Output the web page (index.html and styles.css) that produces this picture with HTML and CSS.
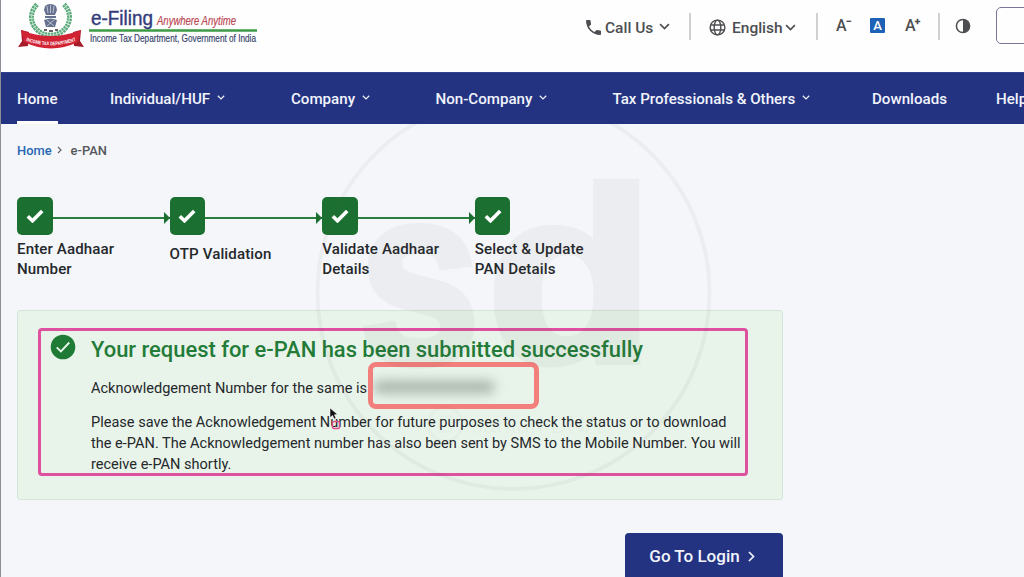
FILE: index.html
```html
<!DOCTYPE html>
<html lang="en">
<head>
<meta charset="utf-8">
<title>e-Filing | e-PAN</title>
<link rel="stylesheet" href="styles.css">
</head>
<body>
<svg class="defs" aria-hidden="true">
  <symbol id="down" viewBox="0 0 10 6"><path d="M1 .8l4 4 4-4" fill="none" stroke="currentColor" stroke-width="1.500"/></symbol>
  <symbol id="tick" viewBox="0 0 18 14"><path d="M1.8 7.2l4.7 4.6L16.2 2.1" fill="none" stroke="#fff" stroke-width="3.6"/></symbol>
</svg>
<header class="top">
  <div class="brand">
    <svg class="emblem" viewBox="0 0 68 50">
      <path d="M20 4.500a19 18 0 1 0 27 0" fill="none" stroke="#58a878" stroke-width="5" stroke-dasharray="2.400 .7"/>
      <path d="M20 4.500a19 18 0 1 0 27 0" fill="none" stroke="#b4dcc4" stroke-width="1"/>
      <g fill="#65718f">
        <path d="M28 6q5-4 11 0l1 4-2 5h-9l-2-5z"/>
        <path d="M28 16h11v2H28z"/>
        <path d="M27 20q6.500-3 13 0l-2 7h-9z"/>
      </g>
      <path d="M30 6l1 7M33.500 5v8M37 6l-1 7M30 20l7 6M37 20l-7 6" stroke="#c3cad8" fill="none" stroke-width=".9"/>
      <path d="M27 30h3M32 31h4M38 30h3" stroke="#333" stroke-width="1.500"/>
      <path d="M4 30l8 2-1 14-10 1 4-6zM64 30l-8 2 1 14 10 1-4-6z" fill="#a51c2b"/>
      <path d="M4 30q29 12 60 0l-3 12q-27 13-54 0z" fill="#d22335"/>
      <path id="rib" d="M8 40.500q26 9.500 52 0" fill="none"/>
      <text class="ribbon"><textPath href="#rib" startOffset="1" textLength="51" lengthAdjust="spacingAndGlyphs">INCOME TAX DEPARTMENT</textPath></text>
    </svg>
    <svg class="wordmark" viewBox="0 0 170 50">
      <text class="w-main" x="2" y="25" textLength="62" lengthAdjust="spacingAndGlyphs">e-Filing</text>
      <text class="w-tag" x="68" y="24.500" textLength="79" lengthAdjust="spacingAndGlyphs">Anywhere Anytime</text>
      <path d="M0 30.500h168" stroke="#3d9a45" stroke-width="2.400"/>
      <text class="w-sub" x="1" y="42" textLength="166" lengthAdjust="spacingAndGlyphs">Income Tax Department, Government of India</text>
    </svg>
  </div>
  <div class="tools">
    <div class="tool call">
      <svg width="15" height="15" viewBox="3 3 18 18"><path fill="#4d4e51" d="M6.600 10.800c1.400 2.800 3.800 5.100 6.600 6.600l2.200-2.200c.3-.3.7-.4 1-.2 1.100.4 2.300.6 3.600.6.600 0 1 .4 1 1V20c0 .6-.4 1-1 1C10.600 21 3 13.400 3 4c0-.6.5-1 1-1h3.500c.6 0 1 .4 1 1 0 1.200.2 2.400.6 3.600.1.300 0 .7-.3 1z"/></svg>
      <span class="call-t">Call Us</span><svg class="dd" width="11" height="7"><use href="#down"/></svg>
    </div>
    <i class="sep"></i>
    <div class="tool lang">
      <svg width="17" height="17" viewBox="0 0 18 18" fill="none" stroke="#4d4e51" stroke-width="1.500"><circle cx="9" cy="9" r="7.800"/><ellipse cx="9" cy="9" rx="3.500" ry="7.800"/><path d="M2 6.300h14M2 11.700h14"/></svg>
      <span class="lang-t">English</span><svg class="dd" width="11" height="7"><use href="#down"/></svg>
    </div>
    <i class="sep"></i>
    <div class="sizes"><span class="sz">A<sup>−</sup></span><span class="cur">A</span><span class="sz">A<sup>+</sup></span></div>
    <i class="sep"></i>
    <svg class="contrast" width="16" height="16" viewBox="0 0 16 16"><circle cx="8" cy="8" r="6.600" fill="none" stroke="#4d4e51" stroke-width="1.500"/><path d="M8 1.500a6.500 6.500 0 0 1 0 13z" fill="#4d4e51"/></svg>
    <div class="login-box"></div>
  </div>
</header>
<nav class="nav">
  <a class="active"><span>Home</span></a>
  <a>Individual/HUF<svg><use href="#down"/></svg></a>
  <a>Company<svg><use href="#down"/></svg></a>
  <a>Non-Company<svg><use href="#down"/></svg></a>
  <a>Tax Professionals &amp; Others<svg><use href="#down"/></svg></a>
  <a>Downloads</a>
  <a>Help</a>
</nav>
<main>
  <div class="crumbs"><a>Home</a><svg width="5" height="8" viewBox="0 0 5 8"><path d="M1 1l3 3-3 3" fill="none" stroke="#666" stroke-width="1.200"/></svg><span>e-PAN</span></div>
  <ol class="steps">
    <li><div class="mark"><b><svg><use href="#tick"/></svg></b><i></i></div><p>Enter Aadhaar<br>Number</p></li>
    <li><div class="mark"><b><svg><use href="#tick"/></svg></b><i></i></div><p class="single">OTP Validation</p></li>
    <li><div class="mark"><b><svg><use href="#tick"/></svg></b><i></i></div><p>Validate Aadhaar<br>Details</p></li>
    <li><div class="mark"><b><svg><use href="#tick"/></svg></b></div><p>Select &amp; Update<br>PAN Details</p></li>
  </ol>
  <section class="panel">
    <div class="outline">
      <svg class="ok" width="26" height="26" viewBox="0 0 26 26"><circle cx="13" cy="13" r="12.300" fill="#1f7a35"/><path d="M6.700 13.300l4.200 4.200 8.400-9" fill="none" stroke="#e8f5e9" stroke-width="1.900"/></svg>
      <div class="msg">
        <h1>Your request for e-PAN has been submitted successfully</h1>
        <div class="ack"><span>Acknowledgement Number for the same is</span><div class="redact"><i></i></div></div>
        <p>Please save the Acknowledgement Number for future purposes to check the status or to download<br>the e-PAN. The Acknowledgement number has also been sent by SMS to the Mobile Number. You will<br>receive e-PAN shortly.</p>
      </div>
    </div>
  </section>
  <div class="actions"><button>Go To Login<svg width="7" height="11" viewBox="0 0 7 11"><path d="M1 1l4.500 4.500L1 10" fill="none" stroke="currentColor" stroke-width="1.700"/></svg></button></div>
</main>
<svg class="watermark" viewBox="0 0 400 400">
  <defs><linearGradient id="fade" x1="0" y1="0" x2="0" y2="1"><stop offset="0.069" stop-color="#555" stop-opacity=".25"/><stop offset="0.070" stop-color="#555"/></linearGradient></defs>
  <circle cx="199.500" cy="200" r="196" fill="none" stroke="url(#fade)" stroke-width="4"/>
  <text class="wm" x="45" y="270" textLength="121" lengthAdjust="spacingAndGlyphs">s</text>
  <text class="wm d" x="173" y="268" textLength="167" lengthAdjust="spacingAndGlyphs">d</text>
  <g class="wm-small"><circle cx="131" cy="331" r="17" fill="none" stroke="#555" stroke-width="3"/><text x="122" y="340" font-size="25">C</text><text x="157" y="340" font-size="24" textLength="130">sarkari DNA</text></g>
</svg>
<svg class="pointer" viewBox="0 0 14 24"><path d="M1 1v9.500l2.500-2 1.700 3.600 1.800-.9-1.600-3.400 3.100-.4z" fill="#111" stroke="#fff" stroke-width=".5"/><rect x="3.500" y="14.500" width="7" height="7" rx="1.500" fill="none" stroke="#dc4f86" stroke-width="1.400"/></svg>
<div class="edge"></div>
</body>
</html>
```
FILE: styles.css
```css
* { box-sizing: border-box; }
body { margin: 0; width: 1024px; height: 577px; overflow: hidden; position: relative; background: #f4f6fa; font-family: Roboto, "Open Sans", sans-serif; color: #25282b; }
.defs { position: absolute; width: 0; height: 0; }
h1, p, ol { margin: 0; padding: 0; }
.top { height: 72px; background: #fefefe; display: flex; justify-content: space-between; overflow: hidden; }
.brand { display: flex; padding-left: 17px; }
.emblem { width: 68px; height: 50px; }
.ribbon { font: bold 5px "Liberation Sans", sans-serif; fill: #fff; }
.wordmark { width: 170px; height: 50px; margin-left: 4px; }
.w-main { font: 20px "Liberation Sans", sans-serif; fill: #343c7b; stroke: #343c7b; stroke-width: .4; }
.w-tag { font: italic 12px "Liberation Sans", sans-serif; fill: #bb4854; stroke: #bb4854; stroke-width: .2; }
.w-sub { font: 11px "Liberation Sans", sans-serif; fill: #39466f; stroke: #39466f; stroke-width: .2; }
.tools { width: 439px; display: flex; align-items: center; height: 54px; color: #4d4e51; }
.tools > *, .tool > * { flex: none; }
.tool { display: flex; align-items: center; font-size: 15.500px; font-weight: 500; white-space: nowrap; padding-top: 1px; }
.call { width: 104px; padding-left: 1px; }
.call-t { margin-left: 4px; }
.dd { margin-left: auto; margin-right: 19px; margin-top: -3px; }
.sep { width: 2px; height: 27px; margin-top: -2px; background: #d0d0d2; }
.lang { width: 125px; padding-left: 18px; }
.lang-t { margin-left: 6px; }
.lang .dd { margin-right: 20px; margin-top: -1px; }
.sizes { display: flex; align-items: center; width: 120px; padding-left: 18px; margin-top: -2px; font-size: 16px; font-weight: 500; }
.sz { width: 35px; flex: none; position: relative; line-height: 18px; }
.sz sup { font-size: 11px; line-height: 0; position: relative; top: 0; margin-left: -1px; font-weight: 800; }
.cur { width: 15px; height: 15px; flex: none; margin: -1px 20px 0 -1px; background: #1d62b7; color: #fff; border-radius: 1px; font-size: 13px; line-height: 15px; text-align: center; }
.contrast { margin: -2px 25px 0 15px; }
.login-box { width: 60px; height: 37px; margin-top: -4px; border: 1.500px solid #77779a; border-radius: 5px; }
.nav { height: 52px; background: #233382; display: grid; grid-template-columns: 93px 181px 144.500px 177px 259.500px 124px 60px; padding-left: 17px; border-top: 1px solid #34418b; color: #f2f4fc; font-size: 15.120px; font-weight: 500; overflow: hidden; }
.nav a { display: flex; align-items: center; white-space: nowrap; height: 51px; }
.nav a svg { width: 8px; height: 5px; margin: -2px 0 0 6.500px; }
.nav .active span { display: flex; align-items: center; height: 51px; border-bottom: 3px solid #fff; padding-top: 3px; }
main { padding-left: 17px; }
.crumbs { height: 73px; padding-top: 17.600px; display: flex; align-items: flex-start; line-height: 17px; font-size: 12.900px; font-weight: 500; color: #55575b; }
.crumbs a { color: #2867b2; }
.crumbs svg { margin: 4px 9px 0 5px; }
.steps { display: grid; grid-template-columns: repeat(4, 152.600px); list-style: none; height: 113px; }
.mark { display: flex; }
.mark b { width: 35.500px; height: 38px; border-radius: 5px; background: #1b7031; display: flex; align-items: center; justify-content: center; }
.mark b svg { width: 18px; height: 14px; }
.mark i { width: 117px; height: 2px; background: #2b7f3e; margin-top: 19.500px; position: relative; }
.mark i::after { content: ""; position: absolute; right: 0; top: -5px; border: 6px solid transparent; border-left: 6px solid #1b7031; border-right: 0; }
.steps p { font-size: 15.120px; font-weight: 500; line-height: 20.200px; padding-top: 4px; letter-spacing: .1px; white-space: nowrap; }
.steps .single { padding-top: 8.500px; }
.panel { width: 766px; height: 190px; background: #e8f4ea; border: 1px solid #d3e5d7; border-radius: 3px; padding: 16.500px 0 0 19.500px; }
.outline { width: 710px; height: 148px; border: 3px solid #dd519f; border-radius: 4px; display: flex; padding: 3px 0 0 9px; }
.ok { flex: none; }
.msg { margin-left: 15.500px; white-space: nowrap; }
h1 { color: #237b38; font-size: 21.930px; font-weight: 500; line-height: 31px; }
.ack { height: 44px; display: flex; font-size: 14.550px; line-height: 47px; }
.redact { width: 170.500px; height: 47px; border: 5px solid #f27f7b; border-radius: 8px; margin: -2.500px 0 0 1px; padding: 14px 0 0 0; overflow: hidden; }
.redact i { display: block; width: 122px; height: 12px; background: #a5b1a7; filter: blur(6px); border-radius: 8px; }
.msg p { font-size: 14.550px; line-height: 21.300px; margin-top: 3px; }
.actions { width: 766px; margin-top: 33px; display: flex; justify-content: flex-end; }
button { width: 158px; height: 48px; border: 0; border-radius: 4px; background: #233382; color: #f2f4fc; font: 500 17px Roboto, sans-serif; display: flex; align-items: center; justify-content: center; gap: 8px; padding: 0 4px 2px 0; }
.watermark { position: absolute; left: 313.500px; top: 93px; width: 400px; height: 400px; opacity: .05; }
.wm { font: bold 250px "Liberation Sans", sans-serif; fill: #555; stroke: #555; stroke-width: 8; }
.wm.d { font-size: 246px; }
.wm-small { font-family: "Liberation Sans", sans-serif; fill: #555; opacity: .5; }
.pointer { position: absolute; left: 329px; top: 407px; width: 14px; height: 24px; }
.edge { position: absolute; left: 0; top: 0; width: 1px; height: 577px; background: #8c8d95; }
```
